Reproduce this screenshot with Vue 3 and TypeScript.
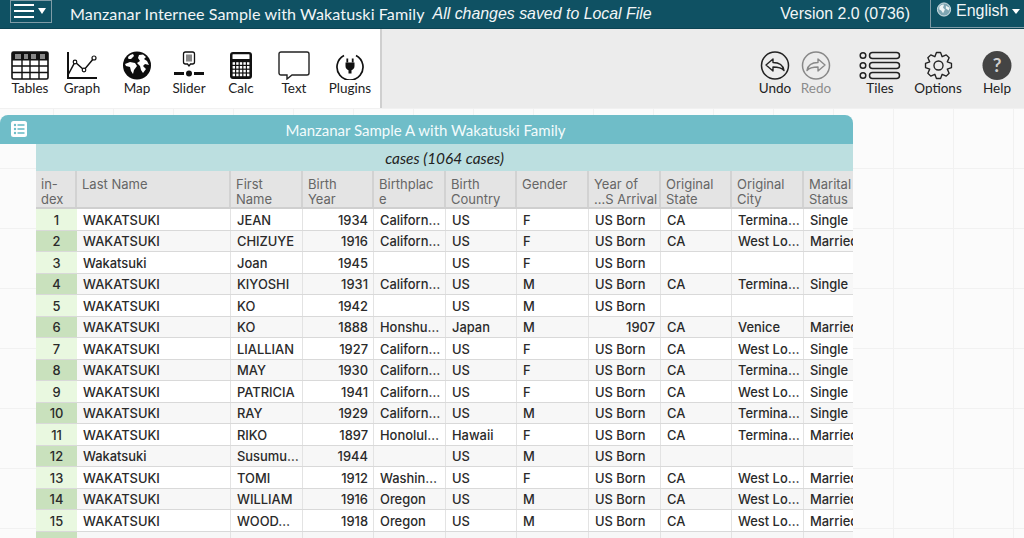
<script setup lang="ts">
type Row = string[];
const cap = 'Californ…';
const term = 'Termina…';
const west = 'West Lo…';
const W = 'WAKATSUKI';
const rows: Row[] = [
  ['1', W, 'JEAN', '1934', cap, 'US', 'F', 'US Born', 'CA', term, 'Single'],
  ['2', W, 'CHIZUYE', '1916', cap, 'US', 'F', 'US Born', 'CA', west, 'Married'],
  ['3', 'Wakatsuki', 'Joan', '1945', '', 'US', 'F', 'US Born', '', '', ''],
  ['4', W, 'KIYOSHI', '1931', cap, 'US', 'M', 'US Born', 'CA', term, 'Single'],
  ['5', W, 'KO', '1942', '', 'US', 'M', 'US Born', '', '', ''],
  ['6', W, 'KO', '1888', 'Honshu…', 'Japan', 'M', '1907', 'CA', 'Venice', 'Married'],
  ['7', W, 'LIALLIAN', '1927', cap, 'US', 'F', 'US Born', 'CA', west, 'Single'],
  ['8', W, 'MAY', '1930', cap, 'US', 'F', 'US Born', 'CA', term, 'Single'],
  ['9', W, 'PATRICIA', '1941', cap, 'US', 'F', 'US Born', 'CA', west, 'Single'],
  ['10', W, 'RAY', '1929', cap, 'US', 'M', 'US Born', 'CA', term, 'Single'],
  ['11', W, 'RIKO', '1897', 'Honolul…', 'Hawaii', 'F', 'US Born', 'CA', term, 'Married'],
  ['12', 'Wakatsuki', 'Susumu…', '1944', '', 'US', 'M', 'US Born', '', '', ''],
  ['13', W, 'TOMI', '1912', 'Washin…', 'US', 'F', 'US Born', 'CA', west, 'Married'],
  ['14', W, 'WILLIAM', '1916', 'Oregon', 'US', 'M', 'US Born', 'CA', west, 'Married'],
  ['15', W, 'WOOD…', '1918', 'Oregon', 'US', 'M', 'US Born', 'CA', west, 'Married'],
  ['', 'Wakatsuki', 'Yukio', '', '', '', '', '', '', '', ''],
];
const headers = ['in-\ndex', 'Last Name', 'First\nName', 'Birth\nYear', 'Birthplac\ne', 'Birth\nCountry', 'Gender', 'Year of\n…S Arrival', 'Original\nState', 'Original\nCity', 'Marital\nStatus'];

function gearPath(): string {
  const cx = 16, cy = 16, teeth = 8;
  const pts: string[] = [];
  for (let i = 0; i < teeth; i++) {
    const a = (i / teeth) * Math.PI * 2;
    const step = (Math.PI * 2) / teeth;
    const p = (r: number, d: number) => `${(cx + r * Math.cos(a + d * step)).toFixed(2)} ${(cy + r * Math.sin(a + d * step)).toFixed(2)}`;
    pts.push(`${i === 0 ? 'M' : 'L'}${p(10.5, -0.5)}`, `L${p(14.5, -0.2)}`, `L${p(14.5, 0.2)}`, `L${p(10.5, 0.5)}`);
  }
  return pts.join(' ') + ' Z';
}
const gear = gearPath();
const calcKeys: { x: number; y: number }[] = [];
for (let r = 0; r < 4; r++) {
  for (let c = 0; c < 5; c++) {
    calcKeys.push({ x: 3.6 + c * 3.6, y: 11.2 + r * 3.8 });
  }
}
</script>

<template>
  <div class="app">
    <header class="topbar">
      <div class="menu-btn">
        <span class="burger"><i></i><i></i><i></i></span>
        <span class="tri"></span>
      </div>
      <span class="doc-title">Manzanar Internee Sample with Wakatuski Family</span>
      <span class="saved">All changes saved to Local File</span>
      <span class="version">Version 2.0 (0736)</span>
      <div class="lang">
        <svg class="lang-globe" viewBox="0 0 16 16" width="16" height="15">
          <circle cx="8" cy="8" r="7" fill="#7fa6b3" stroke="#dfe9ec" stroke-width="1" />
          <path d="M3 5 Q6 2 8 3 L7 6 L9 8 L7 12 L5 9 L3 8 Z M10 4 L14 6 L13 9 L10 7 Z" fill="#eef3f4" />
        </svg>
        <span>English</span>
        <span class="tri small"></span>
      </div>
    </header>

    <section class="toolbar">
      <div class="tools-left">
        <div class="tool">
          <svg viewBox="0 0 38 29" width="38" height="29">
            <rect x="1" y="1" width="36" height="27" rx="1.5" fill="none" stroke="#111" stroke-width="1.6" />
            <rect x="1" y="1" width="36" height="8.5" fill="#111" />
            <rect x="4" y="3" width="6" height="5" fill="#888" /><rect x="13" y="3" width="4" height="5" fill="#888" /><rect x="20" y="3" width="5" height="5" fill="#888" /><rect x="29" y="3" width="5" height="5" fill="#888" />
            <path d="M1 15h36M1 21.500h36M11 1v27M19 1v27M28 1v27" stroke="#111" stroke-width="1.4" fill="none" />
          </svg>
          <span>Tables</span>
        </div>
        <div class="tool">
          <svg viewBox="0 0 32 29" width="32" height="29">
            <path d="M2 1v26h29" fill="none" stroke="#111" stroke-width="2" />
            <path d="M2 24 L9 11 L18 19 L28 7" fill="none" stroke="#111" stroke-width="1.5" />
            <circle cx="9" cy="11" r="1.800" fill="#fff" stroke="#111" stroke-width="1.200" />
            <circle cx="18" cy="19" r="1.800" fill="#fff" stroke="#111" stroke-width="1.200" />
            <circle cx="28" cy="7" r="2" fill="#fff" stroke="#111" stroke-width="1.200" />
          </svg>
          <span>Graph</span>
        </div>
        <div class="tool">
          <svg viewBox="0 0 30 29" width="30" height="29">
            <circle cx="15" cy="14.500" r="14" fill="#0d0d0d" />
            <path d="M6 6 Q8 3.500 11 3 L12 5 L9 8 L6.500 8 Z M3 13 L8 11 L13 12 L15 15 L12 19 L11 23 L9 20 L8 16 L4 15 Z M17 4 L21 3.500 L24 6 L22 8 L25 10 L27 14 L23 13 L21 15 L24 18 L21 22 L19 19 L18 15 L15 12 L18 10 L16 7 Z" fill="#fff" />
          </svg>
          <span>Map</span>
        </div>
        <div class="tool">
          <svg viewBox="0 0 32 29" width="32" height="29">
            <path d="M12.500 1h7a2 2 0 0 1 2 2v8a2 2 0 0 1-2 2h-2l-1.500 2-1.500-2h-2a2 2 0 0 1-2-2V3a2 2 0 0 1 2-2z" fill="#fff" stroke="#111" stroke-width="1.300" />
            <path d="M14 3.500v7M16 3.500v7M18 3.500v7" stroke="#111" stroke-width="1" />
            <path d="M1 22.500h10M21 22.500h10" stroke="#111" stroke-width="2.800" />
            <circle cx="16" cy="22.500" r="3" fill="#111" />
          </svg>
          <span>Slider</span>
        </div>
        <div class="tool">
          <svg viewBox="0 0 24 29" width="24" height="29">
            <rect x="1" y="1" width="22" height="27" rx="3" fill="#111" />
            <rect x="3.500" y="3.200" width="17" height="4.800" rx="0.500" fill="#fff" />
            <rect v-for="(k, i) in calcKeys" :key="i" :x="k.x" :y="k.y" width="2.400" height="2.600" fill="#fff" />
          </svg>
          <span>Calc</span>
        </div>
        <div class="tool">
          <svg viewBox="0 0 32 29" width="32" height="29">
            <path d="M3 1h26a2 2 0 0 1 2 2v19a2 2 0 0 1-2 2H14l-5 4v-4H3a2 2 0 0 1-2-2V3a2 2 0 0 1 2-2z" fill="#fff" stroke="#222" stroke-width="1.400" />
          </svg>
          <span>Text</span>
        </div>
        <div class="tool">
          <svg viewBox="0 0 30 29" width="30" height="29">
            <path d="M9 4.500 A13 13 0 1 0 21 4.500" fill="none" stroke="#111" stroke-width="1.700" />
            <path d="M12.300 7.500v4M17.700 7.500v4" stroke="#111" stroke-width="1.800" />
            <path d="M10.500 11.500h9v3.500a4.500 4.500 0 0 1-3 4.200v3.300h-3v-3.300a4.500 4.500 0 0 1-3-4.200z" fill="#111" />
          </svg>
          <span>Plugins</span>
        </div>
      </div>
      <div class="tools-right">
        <div class="tool undo">
          <svg viewBox="0 0 30 29" width="30" height="29">
            <circle cx="15" cy="14.500" r="13.500" fill="none" stroke="#222" stroke-width="1.500" />
            <path d="M6 14l7-6v3.500c5 0 10 2 11 8-2.500-3-6-3.500-11-3.500v4z" fill="none" stroke="#222" stroke-width="1.400" stroke-linejoin="round" />
          </svg>
          <span>Undo</span>
        </div>
        <div class="tool redo disabled">
          <svg viewBox="0 0 30 29" width="30" height="29">
            <circle cx="15" cy="14.500" r="13.500" fill="none" stroke="#888" stroke-width="1.500" />
            <path d="M24 14l-7-6v3.500c-5 0-10 2-11 8 2.500-3 6-3.500 11-3.500v4z" fill="none" stroke="#888" stroke-width="1.400" stroke-linejoin="round" />
          </svg>
          <span>Redo</span>
        </div>
        <div class="tool tiles">
          <svg viewBox="0 0 42 29" width="42" height="29">
            <g fill="none" stroke="#222" stroke-width="1.500">
              <circle cx="4" cy="4.500" r="2.800" /><circle cx="4" cy="14.500" r="2.800" /><circle cx="4" cy="24.500" r="2.800" />
              <rect x="10.500" y="1.500" width="30" height="6" rx="3" /><rect x="10.500" y="11.500" width="30" height="6" rx="3" /><rect x="10.500" y="21.500" width="30" height="6" rx="3" />
            </g>
          </svg>
          <span>Tiles</span>
        </div>
        <div class="tool options">
          <svg viewBox="0 0 32 32" width="29" height="29">
            <path :d="gear" fill="none" stroke="#222" stroke-width="1.500" stroke-linejoin="round" />
            <circle cx="16" cy="16" r="5" fill="none" stroke="#222" stroke-width="1.500" />
          </svg>
          <span>Options</span>
        </div>
        <div class="tool help">
          <svg viewBox="0 0 30 29" width="30" height="29">
            <circle cx="15" cy="14.500" r="14.500" fill="#444" />
            <text x="15" y="21" text-anchor="middle" class="qmark">?</text>
          </svg>
          <span>Help</span>
        </div>
      </div>
    </section>

    <main class="canvas">
      <div class="tile">
        <div class="tile-title">
          <span class="tile-icon">
            <svg viewBox="0 0 16 16" width="16" height="16">
              <rect width="16" height="16" rx="2.500" fill="#fff" />
              <g fill="#6dbdc8">
                <circle cx="4" cy="4" r="1.200" /><circle cx="4" cy="8" r="1.200" /><circle cx="4" cy="12" r="1.200" />
                <rect x="6.500" y="3.200" width="7" height="1.600" /><rect x="6.500" y="7.200" width="7" height="1.600" /><rect x="6.500" y="11.200" width="7" height="1.600" />
              </g>
            </svg>
          </span>
          <span>Manzanar Sample A with Wakatuski Family</span>
        </div>
        <div class="table">
          <div class="cases">cases (1064 cases)</div>
          <div class="row head">
            <div v-for="(h, i) in headers" :key="i" class="cell">{{ h }}</div>
          </div>
          <div v-for="(r, n) in rows" :key="n" class="row body" :class="{ even: n % 2 === 1 }">
            <div
              v-for="(c, i) in r"
              :key="i"
              class="cell"
              :class="{ idx: i === 0, num: i === 3 || (i === 7 && c === '1907') }"
            >{{ c }}</div>
          </div>
        </div>
      </div>
    </main>
  </div>
</template>

<style scoped>
.app {
  width: 1024px;
  height: 538px;
  overflow: hidden;
  display: flex;
  flex-direction: column;
  font-family: Lato, "Liberation Sans", sans-serif;
  background: #fff;
}
.topbar {
  height: 29px;
  flex: none;
  background: #0f5163;
  color: #f2f6f7;
  display: flex;
  align-items: center;
  box-sizing: border-box;
  border-bottom: 1px solid #0b4454;
}
.menu-btn {
  width: 42px;
  height: 23px;
  margin: -6px 0 0 10px;
  border: 1px solid #7f9ca7;
  box-sizing: border-box;
  display: flex;
  align-items: center;
  padding-left: 3px;
  gap: 4px;
}
.burger {
  display: flex;
  flex-direction: column;
  gap: 4px;
  width: 20px;
}
.burger i {
  display: block;
  height: 2px;
  background: #fff;
}
.tri {
  width: 0;
  height: 0;
  border-left: 4.500px solid transparent;
  border-right: 4.500px solid transparent;
  border-top: 6px solid #fff;
}
.tri.small {
  border-left-width: 4px;
  border-right-width: 4px;
  border-top-width: 5px;
  margin-left: 4px;
}
.doc-title {
  margin-left: 18px;
  margin-top: -1px;
  font-size: 16.100px;
  letter-spacing: 0.100px;
  white-space: nowrap;
}
.saved {
  margin-left: 8px;
  margin-top: -1px;
  font-family: "Liberation Sans", sans-serif;
  font-style: italic;
  font-size: 15.900px;
  white-space: nowrap;
}
.version {
  margin-left: auto;
  margin-top: -1px;
  font-family: "Liberation Sans", sans-serif;
  font-size: 15.900px;
  white-space: nowrap;
}
.lang {
  margin-left: 20px;
  width: 94px;
  height: 28px;
  margin-top: -1px;
  box-sizing: border-box;
  border-left: 1px solid #7f9ca7;
  border-bottom: 1px solid #7f9ca7;
  display: flex;
  align-items: flex-start;
  padding: 2px 0 0 5px;
  font-family: "Liberation Sans", sans-serif;
  font-size: 16px;
  line-height: 18px;
}
.lang .tri {
  margin-top: 7px;
}
.lang-globe {
  margin-right: 4px;
}
.toolbar {
  height: 79px;
  flex: none;
  display: flex;
  background: #ececec;
}
.tools-left {
  width: 382px;
  box-sizing: border-box;
  background: #fff;
  border-right: 2px solid #cfcfcf;
  padding-left: 4px;
  display: grid;
  grid-template-columns: 52px 52px 58px 46px 58px 48px 64px;
}
.tools-right {
  margin-left: auto;
  padding-right: 1px;
  display: flex;
}
.tool {
  display: flex;
  flex-direction: column;
  align-items: center;
  padding-top: 22px;
  font-size: 13.500px;
  color: #222;
  white-space: nowrap;
}
.tool svg {
  height: 29px;
  flex: none;
}
.tool span {
  margin-top: 0;
  line-height: 16px;
}
.undo { width: 40px; }
.redo { width: 42px; margin-right: 18px; }
.tiles { width: 50px; }
.options { width: 66px; }
.help { width: 52px; }
.disabled { color: #8c8c8c; }
.qmark {
  fill: #cfcfcf;
  font-family: Lato, sans-serif;
  font-weight: 700;
  font-size: 19px;
}
.canvas {
  flex: 1;
  min-height: 0;
  padding-top: 7px;
  background-color: #fbfbfb;
  background-image:
    linear-gradient(to right, #f1f1f1 1px, transparent 1px),
    linear-gradient(to bottom, #f1f1f1 1px, transparent 1px);
  background-size: 60px 60px;
  background-position: -7px 0;
  overflow: hidden;
}
.tile {
  width: 853px;
}
.tile-title {
  height: 29px;
  background: #6fbdc8;
  border-radius: 8px 8px 0 0;
  color: #f3fbfc;
  font-size: 15px;
  display: flex;
  align-items: center;
  justify-content: center;
  position: relative;
  padding-right: 2px;
  box-sizing: border-box;
}
.tile-icon {
  position: absolute;
  left: 11px;
  top: 6px;
  height: 16px;
}
.table {
  margin-left: 36px;
  background: #fff;
  font-family: Inter, "Liberation Sans", sans-serif;
  overflow: hidden;
}
.cases {
  height: 27px;
  background: #bcdfe0;
  font-family: Lato, sans-serif;
  font-style: italic;
  font-size: 15.400px;
  color: #222;
  display: flex;
  align-items: center;
  justify-content: center;
}
.row {
  display: grid;
  grid-template-columns: 41px 154px 72px 71px 72px 71px 72px 72px 71px 72px 50px;
}
.head {
  height: 38px;
  background: #e4e4e4;
  color: #666;
  font-size: 13px;
  line-height: 15px;
  border-bottom: 2px solid #cfcfcf;
  box-sizing: border-box;
}
.head .cell {
  white-space: pre;
  padding: 6px 0 0 5px;
  border-right: 2px solid #d2d2d2;
  box-sizing: border-box;
  overflow: hidden;
}
.head .cell:last-child {
  border-right: none;
}
.body {
  height: 21.500px;
  box-sizing: border-box;
  border-bottom: 1.500px solid #d9d9d9;
  font-size: 12.900px;
  font-weight: 500;
  line-height: 20px;
  padding-top: 0;
  color: #2a2a2a;
  background: #fff;
}
.body.even {
  background: #f7f7f7;
}
.body .cell {
  padding: 1.500px 0 0 6px;
  border-right: 1px solid #e3e3e3;
  box-sizing: border-box;
  white-space: nowrap;
  overflow: hidden;
}
.body .cell:last-child {
  border-right: none;
}
.body:last-child .cell {
  padding-top: 3.500px;
}
.body .cell.idx {
  background: #e9f8e0;
  text-align: center;
  padding-left: 0;
  border-right: none;
}
.body.even .cell.idx {
  background: #c9e1bd;
}
.body .cell.num {
  text-align: right;
  padding-left: 0;
  padding-right: 5px;
}
</style>

<style>
html, body {
  margin: 0;
  overflow: hidden;
}
</style>
